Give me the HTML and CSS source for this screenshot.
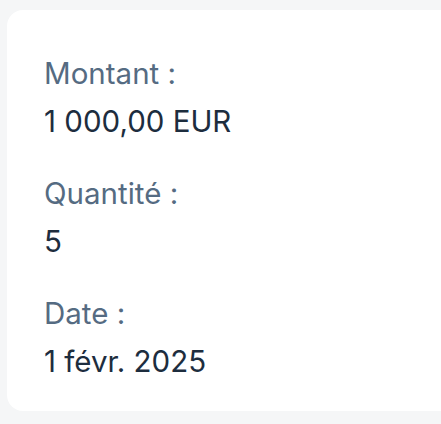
FILE: index.html
```html
<!DOCTYPE html>
<html lang="fr">
<head>
<meta charset="utf-8">
<link rel="stylesheet" href="styles.css">
</head>
<body>
<div class="page">
  <div class="card">
    <div class="field">
      <div class="label">Montant :</div>
      <div class="value">1&nbsp;000,00 EUR</div>
    </div>
    <div class="field">
      <div class="label">Quantité :</div>
      <div class="value">5</div>
    </div>
    <div class="field">
      <div class="label">Date :</div>
      <div class="value">1 févr. 2025</div>
    </div>
  </div>
</div>
</body>
</html>
```
FILE: styles.css
```css
html, body {
  margin: 0;
  background: #f5f6f7;
}
body {
  font-family: Inter, "Liberation Sans", Arial, sans-serif;
}
.page {
  width: 441px;
  height: 424px;
  overflow: hidden;
  padding: 10px 0 0 7px;
  box-sizing: border-box;
}
.card {
  background: #ffffff;
  border-radius: 16px;
  width: 460px;
  height: 401px;
  box-sizing: border-box;
  padding: 45px 0 0 37px;
  display: flex;
  flex-direction: column;
  gap: 36px;
}
.field {
  display: flex;
  flex-direction: column;
  gap: 12px;
}
.label {
  font-size: 29.5px;
  line-height: 36px;
  color: #556b82;
}
.value {
  font-size: 29.5px;
  line-height: 36px;
  color: #1d2d3e;
}
```
